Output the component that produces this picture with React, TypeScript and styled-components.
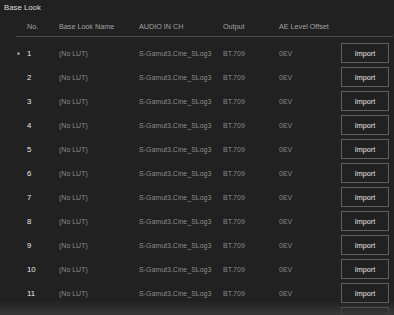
import React from 'react';
import styled, { createGlobalStyle } from 'styled-components';

interface LookRow {
  no: number;
  name: string;
  audio: string;
  output: string;
  offset: string;
  active?: boolean;
}

const rows: LookRow[] = Array.from({ length: 12 }, (_, i) => ({
  no: i + 1,
  name: '(No LUT)',
  audio: 'S-Gamut3.Cine_SLog3',
  output: 'BT.709',
  offset: '0EV',
  active: i === 0,
}));

const GlobalStyle = createGlobalStyle`
  html, body {
    margin: 0;
    padding: 0;
    background: #212121;
  }
`;

const App: React.FC = () => (
  <>
    <GlobalStyle />
    <Screen>
      <Title>Base Look</Title>
      <HeaderRow>
        <span />
        <HeaderText>No.</HeaderText>
        <HeaderText>Base Look Name</HeaderText>
        <HeaderText>AUDIO IN CH</HeaderText>
        <HeaderText>Output</HeaderText>
        <HeaderText>AE Level Offset</HeaderText>
        <span />
      </HeaderRow>
      <List>
        {rows.map((row) => (
          <Row key={row.no}>
            <Bullet>{row.active ? <Dot /> : null}</Bullet>
            <Number>{row.no}</Number>
            <Cell>{row.name}</Cell>
            <Cell>{row.audio}</Cell>
            <Cell>{row.output}</Cell>
            <Cell>{row.offset}</Cell>
            <ImportButton>Import</ImportButton>
          </Row>
        ))}
      </List>
      <BottomFade />
    </Screen>
  </>
);

export default App;

const columns = '11px 32px 80px 84px 56px 62px 48px';

const Screen = styled.div`
  position: relative;
  width: 394px;
  height: 315px;
  overflow: hidden;
  background: #212121;
  font-family: 'Liberation Sans', Arial, sans-serif;
  font-size: 7.2px;
`;

const Title = styled.div`
  height: 16px;
  padding-left: 4px;
  line-height: 15px;
  font-size: 7.8px;
  color: #dedede;
`;

const HeaderRow = styled.div`
  display: grid;
  grid-template-columns: ${columns};
  align-items: center;
  height: 20px;
  margin-left: 16px;
  margin-right: 1px;
  border-bottom: 1px solid #4a4a4a;
`;

const HeaderText = styled.span`
  color: #a3a3a3;
  white-space: nowrap;
`;

const List = styled.div`
  display: flex;
  flex-direction: column;
  padding-top: 4px;
`;

const Row = styled.div`
  display: grid;
  grid-template-columns: ${columns};
  align-items: center;
  height: 24px;
  margin-left: 16px;
`;

const Bullet = styled.span`
  display: flex;
  align-items: center;
`;

const Dot = styled.span`
  display: block;
  width: 3px;
  height: 3px;
  margin-left: 1px;
  border-radius: 50%;
  background: #8a8a8a;
`;

const Number = styled.span`
  color: #e8e8e8;
  font-size: 7.8px;
`;

const Cell = styled.span`
  color: #8a8a8a;
  font-size: 7px;
  white-space: nowrap;
`;

const ImportButton = styled.button`
  box-sizing: border-box;
  width: 48px;
  height: 20px;
  padding: 0;
  border: 1px solid #5f5f5f;
  background: transparent;
  color: #e6e6e6;
  font-family: inherit;
  font-size: 7.2px;
`;

const BottomFade = styled.div`
  position: absolute;
  left: 0;
  right: 0;
  bottom: 0;
  height: 14px;
  background: linear-gradient(to bottom, rgba(33, 33, 33, 0), rgba(58, 58, 58, 0.95));
`;
